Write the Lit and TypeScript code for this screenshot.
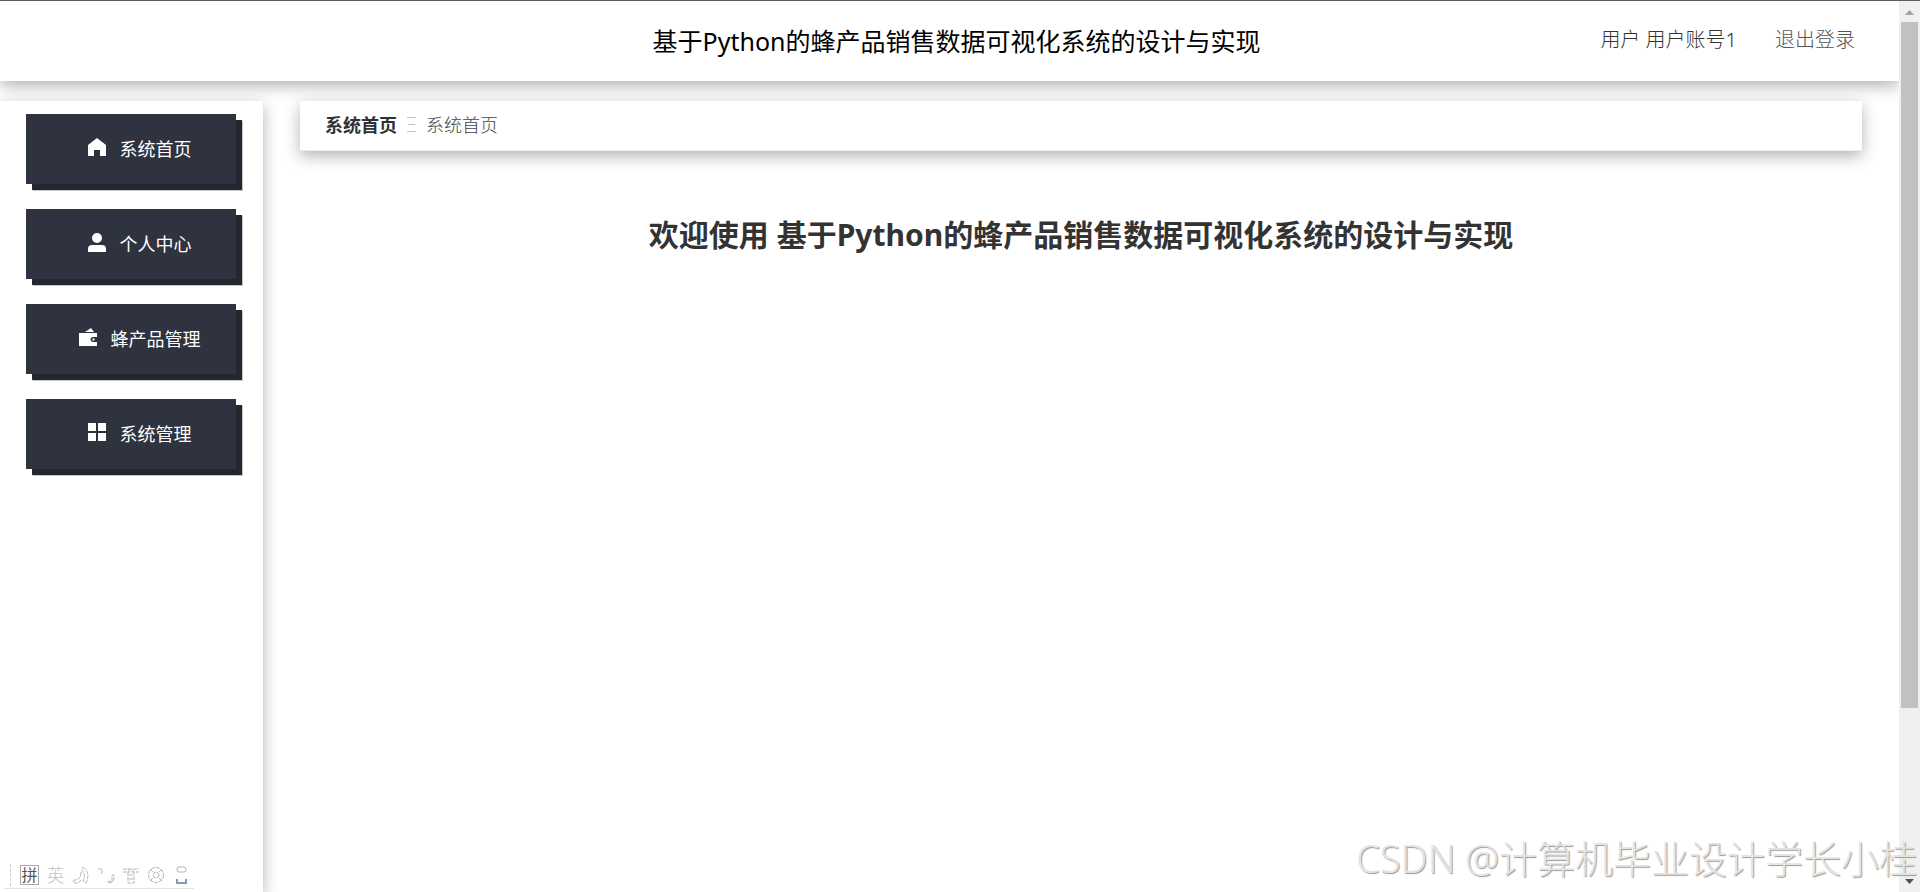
import { LitElement, html, css, svg } from "lit";
import { customElement } from "lit/decorators.js";

const icons: Record<string, unknown> = {
  home: svg`<path d="M9 0 18 7V18H12V12H6V18H0V7Z"/>`,
  user: svg`<circle cx="9" cy="5" r="5"/><path d="M0 19V16Q0 12 4 12H14Q18 12 18 16V19Z"/>`,
  wallet: svg`<path d="M6 4 12 0 15 4ZM0 5H18V9H14A2 2 0 0 0 14 14H18V18H0Z"/><rect x="13.500" y="10.500" width="2" height="2"/>`,
  grid: svg`<path d="M0 0H8V8H0ZM10 0H18V8H10ZM0 10H8V18H0ZM10 10H18V18H10Z"/>`,
};

const menu = [
  { icon: "home", label: "系统首页" },
  { icon: "user", label: "个人中心" },
  { icon: "wallet", label: "蜂产品管理" },
  { icon: "grid", label: "系统管理" },
];

@customElement("app-root")
export class AppRoot extends LitElement {
  static styles = css`
    :host {
      display: flex;
      position: relative;
      height: 100vh;
      overflow: hidden;
      box-sizing: border-box;
      border-top: 1px solid #5e5c63;
      background: #fff;
      color: #333;
      font-family: "Noto Sans", "Noto Sans CJK SC", sans-serif;
    }
    .page { flex: 1; min-width: 0; display: flex; flex-direction: column; overflow: hidden; }
    .header {
      display: grid;
      grid-template-columns: 1fr auto 1fr;
      align-items: center;
      height: 80px;
      flex: none;
      padding: 0 44px 0 58px;
      background: #fff;
      box-shadow: 0 5px 15px rgba(0, 0, 0, 0.3);
    }
    .title { grid-column: 2; margin: 0; font-size: 25px; font-weight: 400; line-height: 36px; color: #000; }
    .account { justify-self: end; display: flex; gap: 38px; font-size: 20px; line-height: 28px; padding-bottom: 2px; font-weight: 300; }
    .logout { border: 0; padding: 0; background: none; font: inherit; color: #555; cursor: pointer; }
    .body { flex: 1; display: flex; gap: 37px; padding-top: 20px; min-height: 0; }
    .sidebar {
      width: 263px;
      flex: none;
      box-sizing: border-box;
      padding: 13px 27px 0 26px;
      background: #fff;
      box-shadow: 0 5px 15px rgba(0, 0, 0, 0.3);
    }
    .menu { list-style: none; margin: 0; padding: 0; display: grid; gap: 25px; }
    .item {
      display: flex;
      align-items: center;
      justify-content: center;
      gap: 14px;
      width: 210px;
      height: 70px;
      padding: 0 0 2px 17px;
      border: 0;
      background: #2e333f;
      box-shadow: 6px 6px 0 #23272f, 7px 7px 0 #c4c6c9;
      color: #fff;
      font: inherit;
      font-size: 18px;
      cursor: pointer;
    }
    .icon { width: 18px; height: 19px; fill: currentColor; margin-bottom: 2px; }
    .main { flex: 1; min-width: 0; padding-right: 37px; }
    .crumbs {
      display: flex;
      align-items: center;
      gap: 10px;
      height: 50px;
      box-sizing: border-box;
      padding: 0 25px 3px;
      border-bottom: 1px solid #ebeef0;
      background: #fff;
      box-shadow: 0 5px 15px rgba(0, 0, 0, 0.3);
      font-size: 18px;
    }
    .crumb { color: #303133; font-weight: 700; text-decoration: none; }
    .here { color: #444; font-weight: 300; }
    .sep { width: 9px; height: 15px; fill: none; stroke: #c0c4cc; }
    .welcome { margin: 62px 0 0; text-align: center; font-size: 30px; line-height: 44px; font-weight: 700; }
    .scroll { width: 21px; flex: none; box-sizing: border-box; background: #f0f0f0; display: flex; flex-direction: column; align-items: center; padding: 9px 0 8px; }
    .arrow { width: 9px; height: 5px; fill: #a3a3a3; flex: none; }
    .arrow.down { fill: #505050; margin-top: auto; }
    .thumb { width: 17px; height: 78.5%; margin-top: 7px; background: #c1c1c1; }
    .ime {
      position: absolute;
      left: 4px;
      bottom: 3px;
      display: flex;
      align-items: center;
      gap: 7px;
      height: 27px;
      padding: 0 4px 0 6px;
      border-bottom: 1px solid #e2e2e2;
      font-size: 16px;
      line-height: 18px;
      color: #c4c4c4;
    }
    .grip { height: 22px; border-left: 1px dashed #ccc; margin-right: 2px; }
    .mode { border: 1px solid #aaa; width: 17px; height: 18px; text-align: center; color: #555; }
    .lang { font-weight: 300; width: 19px; text-align: center; font-size: 18px; }
    .tool { width: 18px; height: 18px; fill: none; stroke: #b4b4b4; stroke-dasharray: 4 1; }
    .tool.solid { stroke-dasharray: none; }
    .mark {
      position: absolute;
      right: 3px;
      bottom: 10px;
      font-size: 38px;
      line-height: 48px;
      font-weight: 300;
      color: #e4e4e4;
      text-shadow: 1px 1px 1px #999;
      white-space: nowrap;
      pointer-events: none;
    }
  `;

  render() {
    return html`
      <div class="page">
        <header class="header">
          <h1 class="title">基于Python的蜂产品销售数据可视化系统的设计与实现</h1>
          <div class="account"><span>用户 用户账号1</span><button class="logout">退出登录</button></div>
        </header>
        <div class="body">
          <nav class="sidebar">
            <ul class="menu">
              ${menu.map((m) => html`<li><button class="item"><svg class="icon" viewBox="0 0 18 19">${icons[m.icon]}</svg>${m.label}</button></li>`)}
            </ul>
          </nav>
          <main class="main">
            <nav class="crumbs">
              <a class="crumb" href="#">系统首页</a>
              <svg class="sep" viewBox="0 0 9 15"><path d="M0 .5H9M1 7.500H8M0 14.500H9"/></svg>
              <span class="here">系统首页</span>
            </nav>
            <h2 class="welcome">欢迎使用 基于Python的蜂产品销售数据可视化系统的设计与实现</h2>
          </main>
        </div>
      </div>
      <div class="scroll">
        <svg class="arrow" viewBox="0 0 9 5"><path d="M4.500 0 9 5H0Z"/></svg>
        <div class="thumb"></div>
        <svg class="arrow down" viewBox="0 0 9 5"><path d="M0 0H9L4.500 5Z"/></svg>
      </div>
      <div class="ime">
        <span class="grip"></span>
        <span class="mode">拼</span>
        <span class="lang">英</span>
        <svg class="tool" viewBox="0 0 18 18"><path d="M11 1Q19 7 14 17L11 15Q14 9 10 4ZM9 6Q9 14 2 14L1 16Q6 19 9 14"/></svg>
        <svg class="tool" viewBox="0 0 18 18"><path d="M1 3H5V7L3 8M10 16L15 15V9H17V13Q16 17 11 17"/></svg>
        <svg class="tool" viewBox="0 0 18 18"><path d="M1 3H17M1 6H6V17H12V6H17M7 3V6H11V3M7 9H11M7 13H11"/></svg>
        <svg class="tool" viewBox="0 0 18 18"><circle cx="9" cy="9" r="7.500"/><circle cx="9" cy="9" r="3"/><path d="M3 3 6 6M15 3 12 6M3 15 6 12M15 15 12 12"/></svg>
        <svg class="tool solid" viewBox="0 0 18 18"><rect x="5" y="1" width="9" height="5" rx="2"/><path d="M5 13V17H14V13" stroke="#8798bb" stroke-width="2"/></svg>
      </div>
      <div class="mark">CSDN @计算机毕业设计学长小桂</div>
    `;
  }
}
